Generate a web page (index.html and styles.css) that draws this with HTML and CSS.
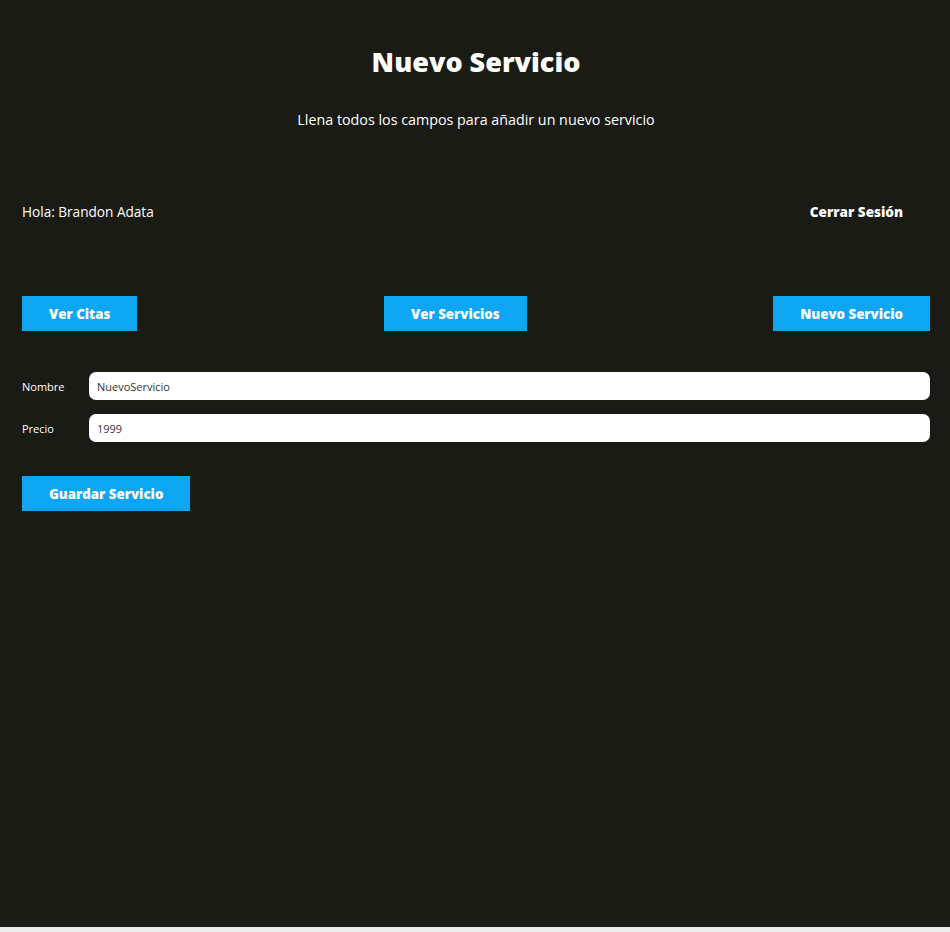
FILE: index.html
```html
<!DOCTYPE html>
<html lang="es">
<head>
<meta charset="utf-8">
<title>Nuevo Servicio</title>
<link rel="stylesheet" href="styles.css">
</head>
<body>
<div class="app">
  <h1 class="titulo">Nuevo Servicio</h1>
  <p class="descripcion">Llena todos los campos para añadir un nuevo servicio</p>

  <div class="barra">
    <p class="saludo">Hola: Brandon Adata</p>
    <a class="cerrar" href="#">Cerrar Sesión</a>
  </div>

  <nav class="barra-servicios">
    <a class="boton" href="#">Ver Citas</a>
    <a class="boton" href="#">Ver Servicios</a>
    <a class="boton" href="#">Nuevo Servicio</a>
  </nav>

  <form class="formulario">
    <div class="campo">
      <label class="etiqueta" for="nombre">Nombre</label>
      <input class="entrada" id="nombre" type="text" value="NuevoServicio">
    </div>
    <div class="campo">
      <label class="etiqueta" for="precio">Precio</label>
      <input class="entrada" id="precio" type="text" value="1999">
    </div>
    <button class="boton boton-guardar" type="button">Guardar Servicio</button>
  </form>
</div>
</body>
</html>
```
FILE: styles.css
```css
html {
  background: #ececec;
}
body {
  margin: 0;
  height: 927px;
  background: #1a1b15;
  color: #ffffff;
  font-family: "Open Sans", "DejaVu Sans", sans-serif;
}
.app {
  padding: 0 20px 0 22px;
}
.titulo {
  margin: 0;
  padding-top: 44px;
  font-size: 27px;
  line-height: 36px;
  font-weight: 800;
  text-align: center;
}
.descripcion {
  margin: 29px 0 0;
  font-size: 14.3px;
  line-height: 22px;
  text-align: center;
}
.barra {
  display: flex;
  justify-content: space-between;
  align-items: center;
  margin-top: 70px;
  padding-right: 27px;
}
.saludo {
  margin: 0;
  font-size: 13.6px;
  line-height: 22px;
}
.cerrar {
  color: #ffffff;
  text-decoration: none;
  font-weight: 800;
  font-size: 13.5px;
  line-height: 22px;
}
.barra-servicios {
  display: flex;
  justify-content: space-between;
  margin-top: 73px;
}
.boton {
  display: inline-flex;
  align-items: center;
  justify-content: center;
  height: 35px;
  padding: 0 27px;
  background: #0da6f3;
  color: #ffffff;
  text-decoration: none;
  font-family: inherit;
  font-size: 13.3px;
  font-weight: 800;
  border: none;
}
.formulario {
  margin-top: 41px;
}
.campo {
  display: flex;
  align-items: center;
  margin-bottom: 14px;
}
.etiqueta {
  flex: 0 0 67px;
  font-size: 11px;
}
.entrada {
  flex: 1;
  height: 28px;
  box-sizing: border-box;
  border: none;
  border-radius: 7px;
  padding: 0 8px;
  background: #ffffff;
  color: #333333;
  font-family: inherit;
  font-size: 11px;
}
.boton-guardar {
  margin-top: 20px;
}
```
